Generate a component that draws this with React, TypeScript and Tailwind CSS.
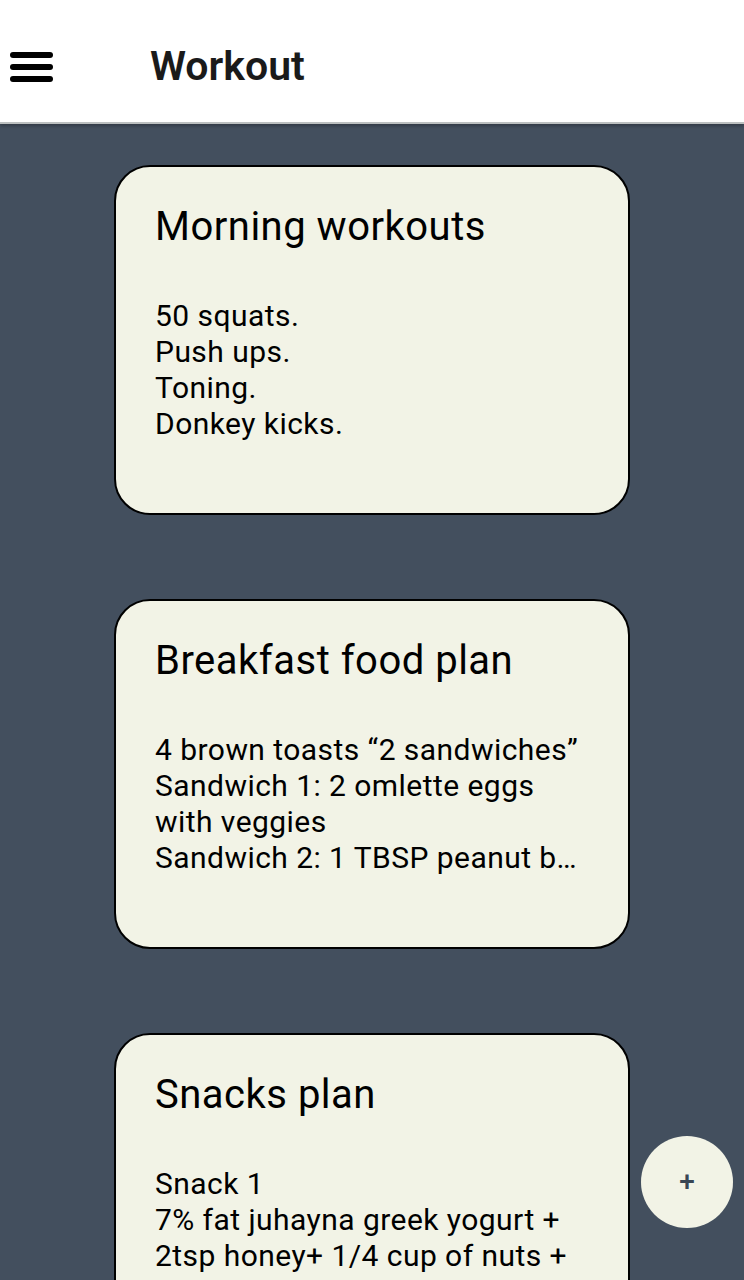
import { useState } from "react";

type Line = {
  text: string;
  cut?: boolean;
};

type Plan = {
  title: string;
  lines: Line[];
};

const plans: Plan[] = [
  {
    title: "Morning workouts",
    lines: [
      { text: "50 squats." },
      { text: "Push ups." },
      { text: "Toning." },
      { text: "Donkey kicks." },
    ],
  },
  {
    title: "Breakfast food plan",
    lines: [
      { text: "4 brown toasts “2 sandwiches”" },
      { text: "Sandwich 1: 2 omlette eggs with veggies" },
      { text: "Sandwich 2: 1 TBSP peanut butter + 1 banana", cut: true },
    ],
  },
  {
    title: "Snacks plan",
    lines: [
      { text: "Snack 1" },
      { text: "7% fat juhayna greek yogurt + 2tsp honey+ 1/4 cup of nuts + berries" },
    ],
  },
];

const PlanCard = ({ plan }: { plan: Plan }) => {
  return (
    <div className="w-[516px] h-[350px] shrink-0 rounded-[36px] border-2 border-black bg-[#f2f3e6] px-[39px] pt-[34px] overflow-hidden">
      <h2 className="text-[40px] leading-[52px] tracking-[0.5px] text-black">{plan.title}</h2>
      <div className="mt-[45px] text-[30px] leading-[36px] tracking-[0.45px] text-black">
        {plan.lines.map((line) => (
          <p key={line.text} className={line.cut ? "truncate" : ""}>
            {line.text}
          </p>
        ))}
      </div>
    </div>
  );
};

const App = () => {
  const [items] = useState<Plan[]>(plans);

  return (
    <div className="w-[744px] h-[1280px] overflow-hidden bg-[#434f5e] relative font-['Roboto',sans-serif]">
      <header className="h-[124px] bg-white border-b-2 border-[#bcc0c0] flex items-center pt-[12px] shadow-[0_2px_3px_rgba(0,0,0,0.25)]">
        <button className="ml-[10px] w-[43px] flex flex-col gap-[6px]">
          <span className="block h-[6px] rounded-full bg-black" />
          <span className="block h-[6px] rounded-full bg-black" />
          <span className="block h-[6px] rounded-full bg-black" />
        </button>
        <h1 className="ml-[97px] text-[41px] font-semibold text-[#1a1a1a]">
          Workout
        </h1>
      </header>

      <div className="flex flex-col items-center gap-[84px] pt-[41px]">
        {items.map((plan) => (
          <PlanCard key={plan.title} plan={plan} />
        ))}
      </div>

      <button className="absolute left-[641px] top-[1136px] w-[92px] h-[92px] rounded-full bg-[#f2f3e6] flex items-center justify-center text-[28px] font-medium leading-none text-[#3a4654]">
        +
      </button>
    </div>
  );
};

export default App;
